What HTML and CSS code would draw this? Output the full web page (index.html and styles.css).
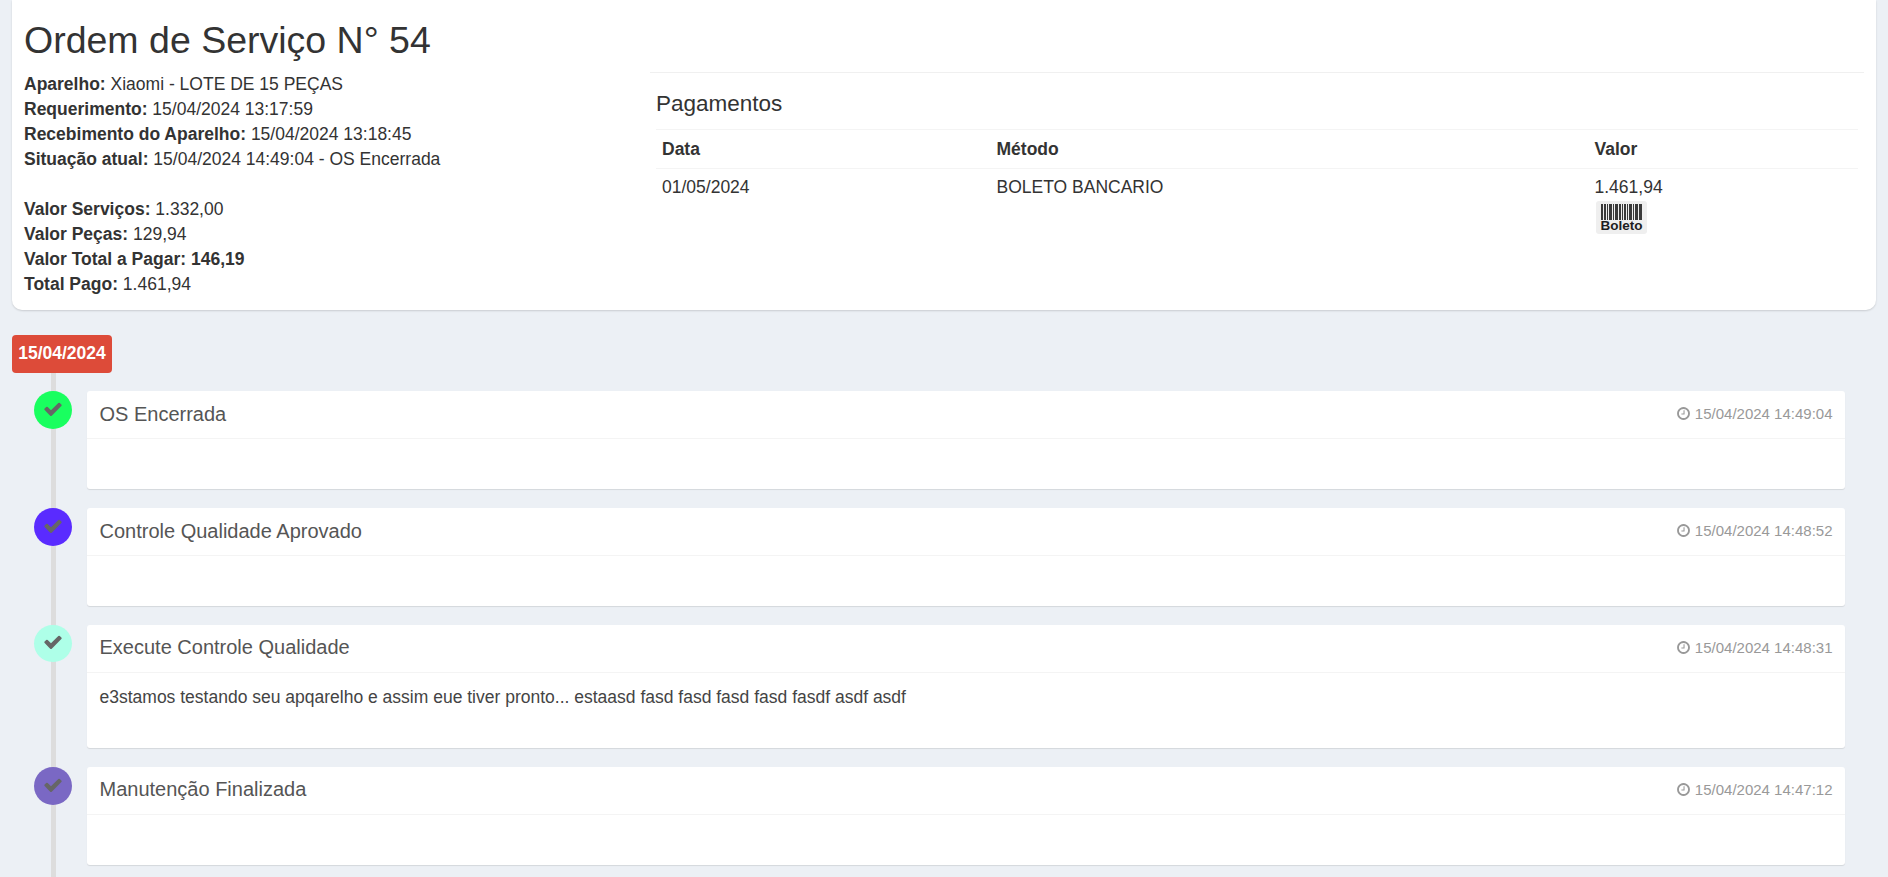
FILE: index.html
```html
<!DOCTYPE html>
<html lang="pt-BR">
<head>
<meta charset="utf-8">
<title>Ordem de Serviço N° 54</title>
<link rel="stylesheet" href="styles.css">
</head>
<body>
<svg class="defs" width="0" height="0" aria-hidden="true">
  <symbol id="i-check" viewBox="0 0 1792 1792"><path d="M1671 566q0 40-28 68l-724 724-136 136q-28 28-68 28t-68-28l-136-136-362-362q-28-28-28-68t28-68l136-136q28-28 68-28t68 28l294 295 656-657q28-28 68-28t68 28l136 136q28 28 28 68z"/></symbol>
  <symbol id="i-clock" viewBox="0 0 1792 1792"><path d="M1024 544v448q0 14-9 23t-23 9h-320q-14 0-23-9t-9-23v-64q0-14 9-23t23-9h224v-352q0-14 9-23t23-9h64q14 0 23 9t9 23zm416 352q0-148-73-273t-198-198-273-73-273 73-198 198-73 273 73 273 198 198 273 73 273-73 198-198 73-273zm224 0q0 209-103 385.5t-279.5 279.5-385.5 103-385.5-103-279.5-279.5-103-385.5 103-385.5 279.5-279.5 385.5-103 385.5 103 279.5 279.5 103 385.5z"/></symbol>
</svg>
<main class="page">
  <section class="summary">
    <div class="info">
      <h1 class="title">Ordem de Serviço N° 54</h1>
      <div class="facts">
        <div><b>Aparelho:</b> Xiaomi - LOTE DE 15 PEÇAS</div>
        <div><b>Requerimento:</b> 15/04/2024 13:17:59</div>
        <div><b>Recebimento do Aparelho:</b> 15/04/2024 13:18:45</div>
        <div><b>Situação atual:</b> 15/04/2024 14:49:04 - OS Encerrada</div>
        <div class="gap"><b>Valor Serviços:</b> 1.332,00</div>
        <div><b>Valor Peças:</b> 129,94</div>
        <div><b>Valor Total a Pagar: 146,19</b></div>
        <div><b>Total Pago:</b> 1.461,94</div>
      </div>
    </div>
    <div class="payments">
      <hr class="rule">
      <div class="pay-inner">
        <h2 class="pay-title">Pagamentos</h2>
        <table class="pay-table">
          <thead>
            <tr><th class="col-date">Data</th><th class="col-method">Método</th><th>Valor</th></tr>
          </thead>
          <tbody>
            <tr>
              <td>01/05/2024</td>
              <td>BOLETO BANCARIO</td>
              <td>1.461,94
                <svg class="boleto" viewBox="0 0 51 33" role="img" aria-label="Boleto">
                  <rect class="boleto-bg" width="51" height="33" rx="3"/>
                  <g class="boleto-bars">
                    <rect x="5" y="3" width="2" height="16"/><rect x="8" y="3" width="2" height="16"/><rect x="11" y="3" width="1" height="16"/><rect x="13" y="3" width="3" height="16"/><rect x="17" y="3" width="1" height="16"/><rect x="19" y="3" width="3" height="16"/><rect x="23" y="3" width="2" height="16"/><rect x="26" y="3" width="1" height="16"/><rect x="28" y="3" width="2" height="16"/><rect x="31" y="3" width="1" height="16"/><rect x="33" y="3" width="3" height="16"/><rect x="37" y="3" width="1" height="16"/><rect x="39" y="3" width="3" height="16"/><rect x="43" y="3" width="3" height="16"/>
                  </g>
                  <text class="boleto-text" x="25.5" y="29" text-anchor="middle">Boleto</text>
                </svg>
              </td>
            </tr>
          </tbody>
        </table>
      </div>
    </div>
  </section>

  <section class="timeline">
    <div class="date-label">15/04/2024</div>

    <article class="event">
      <span class="dot dot-green"><svg class="check"><use href="#i-check"/></svg></span>
      <div class="card">
        <header class="card-head"><h3 class="card-title">OS Encerrada</h3><span class="time"><svg class="clock"><use href="#i-clock"/></svg> 15/04/2024 14:49:04</span></header>
        <div class="card-body"></div>
      </div>
    </article>

    <article class="event">
      <span class="dot dot-blue"><svg class="check"><use href="#i-check"/></svg></span>
      <div class="card">
        <header class="card-head"><h3 class="card-title">Controle Qualidade Aprovado</h3><span class="time"><svg class="clock"><use href="#i-clock"/></svg> 15/04/2024 14:48:52</span></header>
        <div class="card-body"></div>
      </div>
    </article>

    <article class="event">
      <span class="dot dot-mint"><svg class="check"><use href="#i-check"/></svg></span>
      <div class="card">
        <header class="card-head"><h3 class="card-title">Execute Controle Qualidade</h3><span class="time"><svg class="clock"><use href="#i-clock"/></svg> 15/04/2024 14:48:31</span></header>
        <div class="card-body">e3stamos testando seu apqarelho e assim eue tiver pronto... estaasd fasd fasd fasd fasd fasdf asdf asdf</div>
      </div>
    </article>

    <article class="event">
      <span class="dot dot-violet"><svg class="check"><use href="#i-check"/></svg></span>
      <div class="card">
        <header class="card-head"><h3 class="card-title">Manutenção Finalizada</h3><span class="time"><svg class="clock"><use href="#i-clock"/></svg> 15/04/2024 14:47:12</span></header>
        <div class="card-body"></div>
      </div>
    </article>
  </section>
</main>
</body>
</html>
```
FILE: styles.css
```css
* { box-sizing: border-box; }
html, body { height: 100%; margin: 0; overflow: hidden; }
body {
  background: #ecf0f5;
  color: #333;
  font-family: "Liberation Sans", Arial, sans-serif;
  font-size: 17.5px;
  line-height: 25px;
}
.defs { position: absolute; }
.page { height: 877px; overflow: hidden; padding: 0 12px; }

.summary {
  display: grid;
  grid-template-columns: 626px 1fr;
  height: 310px;
  background: #fff;
  border-radius: 0 0 10px 10px;
  box-shadow: 0 1px 2px rgba(0, 0, 0, .15);
  padding: 0 12px;
}
.title { margin: 20px 0 0; font-size: 37.5px; font-weight: 400; line-height: 40px; }
.facts { margin-top: 12px; }
.gap { margin-top: 25px; }

.rule { margin: 72px 0 0; border: 0; border-top: 1px solid #f0f0f0; }
.pay-inner { padding: 0 6px; }
.pay-title { margin: 17px 0 0; height: 39px; font-size: 22.5px; font-weight: 400; line-height: 28px; }
.pay-table { width: 100%; border-collapse: collapse; table-layout: fixed; }
.pay-table th, .pay-table td { padding: 6px; border-top: 1px solid #f4f4f4; text-align: left; vertical-align: top; }
.pay-table th { height: 39px; padding-top: 7px; font-weight: 700; }
.col-date { width: 334.5px; }
.col-method { width: 598px; }
.boleto { display: block; width: 51px; height: 33px; margin: 1px 0 0 1px; }
.boleto-bg { fill: #efefef; }
.boleto-bars { filter: blur(.35px); }
.boleto-bars rect { fill: #3a3a3a; }
.boleto-text { fill: #1e1e1e; font-family: "Liberation Sans", Arial, sans-serif; font-size: 13.5px; font-weight: 700; }

.timeline { position: relative; margin-top: 24.95px; padding-bottom: 40px; }
.timeline::before {
  content: "";
  position: absolute;
  top: 0;
  bottom: 0;
  left: 39px;
  width: 5px;
  background: #ddd;
}
.date-label {
  position: relative;
  width: 100px;
  height: 38px;
  border-radius: 4px;
  background: #dd4b39;
  color: #fff;
  font-weight: 700;
  line-height: 36px;
  text-align: center;
}
.event { position: relative; margin: 18px 31px 18.8px 75px; }
.dot {
  position: absolute;
  top: 0;
  left: -53px;
  display: flex;
  align-items: center;
  justify-content: center;
  width: 38px;
  height: 37.9px;
  border-radius: 50%;
}
.dot-green { background: #19ff5f; }
.dot-blue { background: #5a2bff; }
.dot-mint { background: #aeffe8; }
.dot-violet { background: #7a68c4; }
.check { width: 20px; height: 20px; margin-top: -2px; fill: #666; }

.card {
  background: #fff;
  border-radius: 3px;
  box-shadow: 0 1px 1px rgba(0, 0, 0, .1);
  color: #444;
}
.card-head {
  display: flex;
  align-items: center;
  justify-content: space-between;
  height: 48px;
  padding: 0 12.5px;
  border-bottom: 1px solid #f4f4f4;
}
.card-title { margin: -.4px 0 0; color: #555; font-size: 20px; font-weight: 400; }
.time { margin-top: -1px; color: #999; font-size: 15px; }
.clock { width: 15px; height: 15px; fill: #999; vertical-align: -2px; }
.card-body { min-height: 50px; padding: 12px 12.5px 38px; font-size: 17.5px; line-height: 25.3px; }
```
